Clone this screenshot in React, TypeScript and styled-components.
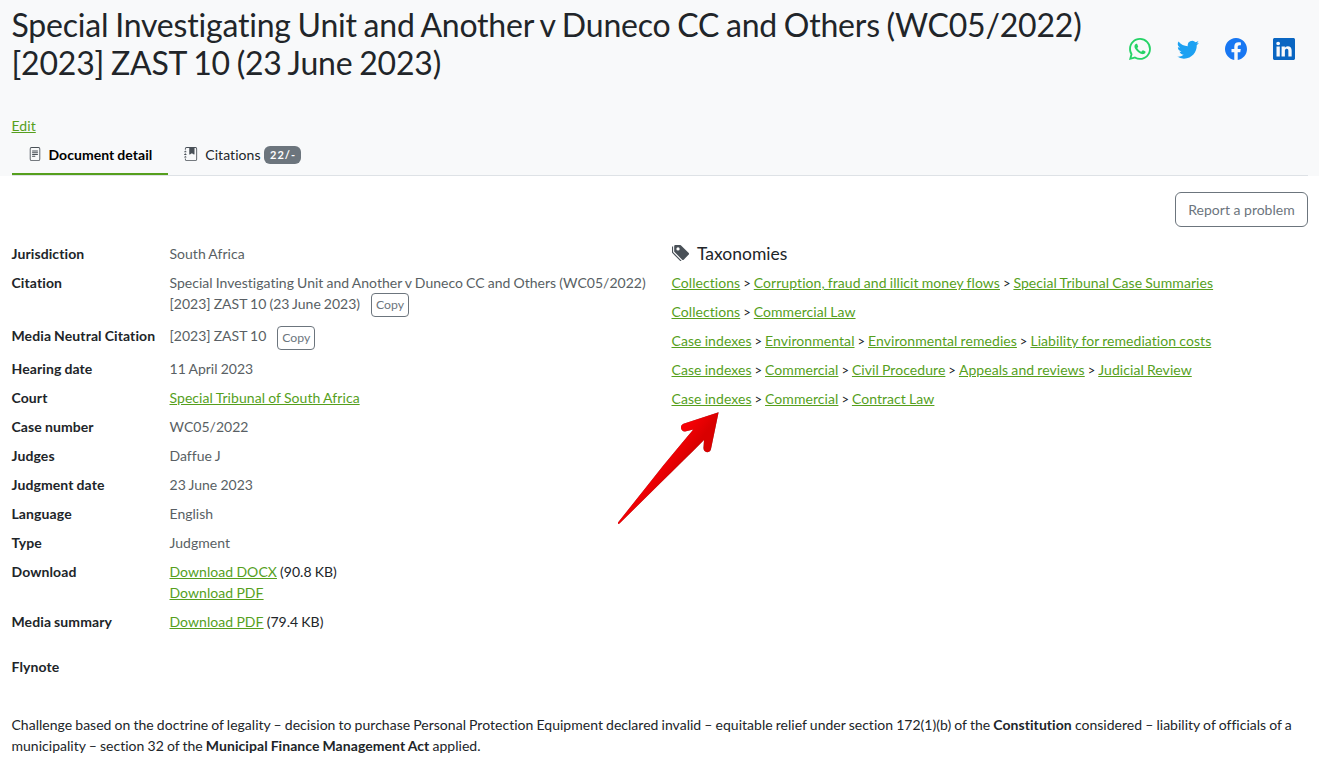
import React from "react";
import styled, { createGlobalStyle } from "styled-components";
import {
  BsFacebook,
  BsFileText,
  BsJournalBookmarkFill,
  BsLinkedin,
  BsTagsFill,
  BsTwitter,
  BsWhatsapp,
} from "react-icons/bs";

const GlobalStyle = createGlobalStyle`
  *, *::before, *::after { box-sizing: border-box; }
  html, body { margin: 0; padding: 0; overflow: hidden; }
  body {
    background: #fff;
    color: #212529;
    font: 400 14px/21px Lato, "Liberation Sans", sans-serif;
    font-variant-ligatures: none;
    letter-spacing: 0.02px;
    word-spacing: -0.5px;
  }
`;

const Page = styled.div`
  position: relative;
  height: 759px;
  overflow: hidden;
`;

const Header = styled.header`
  height: 176px;
  padding: 6px 11px 0 11.5px;
  background: #f8f9fa;
`;

const HeadingRow = styled.div`
  display: flex;
  justify-content: space-between;
  height: 109px;
`;

const Title = styled.h1`
  width: 1090px;
  margin: 0;
  font-size: 32px;
  line-height: 38.4px;
  font-weight: 400;
  letter-spacing: -0.2px;
  word-spacing: -1.2px;
  white-space: nowrap;
`;

const ShareLinks = styled.div`
  display: flex;
  gap: 26px;
  padding: 32px 13.5px 0 0;
`;

const ShareIcon = styled.span<{ $color: string }>`
  display: block;
  height: 22px;
  font-size: 22px;
  line-height: 0;
  color: ${(p) => p.$color};
`;

const Link = styled.a`
  color: #569f1d;
  letter-spacing: 0.065px;
  text-decoration: underline;
`;

const Tabs = styled.nav`
  display: flex;
  height: 40px;
  border-bottom: 1px solid #dee2e6;
`;

const Tab = styled.div<{ $active?: boolean }>`
  display: flex;
  align-items: center;
  height: 39px;
  padding: 0 16px 1px;
  color: ${(p) => (p.$active ? "#000" : "#212529")};
  font-weight: ${(p) => (p.$active ? 700 : 400)};
  letter-spacing: 0.05px;
  border-bottom: 2px solid ${(p) => (p.$active ? "#569f1d" : "transparent")};

  svg {
    margin-right: 7px;
    color: #495057;
  }
`;

const Badge = styled.span`
  width: 37px;
  height: 18px;
  margin: 2px 0 0 3.5px;
  padding-left: 1px;
  border-radius: 6px;
  background: #6c757d;
  color: #fff;
  font-size: 11px;
  line-height: 18px;
  font-weight: 700;
  letter-spacing: 1px;
  text-align: center;
`;

const Main = styled.main`
  padding: 16px 11px 0 11.5px;
`;

const Actions = styled.div`
  display: flex;
  justify-content: flex-end;
  margin-bottom: 16px;
`;

const Button = styled.button<{ $small?: boolean }>`
  width: ${(p) => (p.$small ? "38px" : "133px")};
  height: ${(p) => (p.$small ? "24px" : "35px")};
  padding: 0;
  border: 1px solid #6c757d;
  border-radius: ${(p) => (p.$small ? "4px" : "6px")};
  background: transparent;
  color: #6c757d;
  font-family: inherit;
  font-size: ${(p) => (p.$small ? "12.25px" : "14px")};
  line-height: 18px;
`;

const Columns = styled.div`
  display: grid;
  grid-template-columns: 660px 1fr;
`;

const Details = styled.dl`
  margin: 0;
`;

const DetailRow = styled.div<{ $height?: number }>`
  display: grid;
  grid-template-columns: 158px 490px;
  height: ${(p) => p.$height ?? 29}px;
`;

const Strong = styled.b`
  font-weight: 700;
  letter-spacing: 0.06px;
`;

const Term = styled.dt`
  font-weight: 700;
  letter-spacing: 0.1px;
`;

const Value = styled.dd<{ $muted?: boolean }>`
  margin: 0;
  color: ${(p) => (p.$muted ? "#595f64" : "#212529")};
`;

const CopyLine = styled.div<{ $offset?: number }>`
  display: flex;
  align-items: flex-start;
  gap: 11px;
  letter-spacing: 0;

  button { margin-top: ${(p) => p.$offset ?? 0}px; }
`;

const TaxonomyTitle = styled.h2`
  display: flex;
  align-items: center;
  gap: 8px;
  height: 21px;
  margin: 0 0 8px;
  font-size: 17.5px;
  line-height: 21px;
  font-weight: 400;
  letter-spacing: 0;

  svg { color: #495057; margin-top: -1px; }
`;

const TaxonomyPath = styled.div`
  height: 29px;
  white-space: nowrap;
`;

const Separator = styled.span`
  display: inline-block;
  width: 13.5px;
  text-align: center;
  font-size: 13px;
`;

const SectionTitle = styled.div`
  margin-top: 16px;
  font-weight: 700;
  letter-spacing: 0.1px;
`;

const Summary = styled.p`
  margin: 37px 0 0;
`;

const Arrow = styled.svg`
  position: absolute;
  left: 610px;
  top: 404px;
  filter: drop-shadow(0 0.5px 0.7px rgba(0, 0, 0, 0.5));
`;

const taxonomies = [
  ["Collections", "Corruption, fraud and illicit money flows", "Special Tribunal Case Summaries"],
  ["Collections", "Commercial Law"],
  ["Case indexes", "Environmental", "Environmental remedies", "Liability for remediation costs"],
  ["Case indexes", "Commercial", "Civil Procedure", "Appeals and reviews", "Judicial Review"],
  ["Case indexes", "Commercial", "Contract Law"],
];

const details: { term: string; value: React.ReactNode; height?: number; plain?: boolean }[] = [
  { term: "Jurisdiction", value: "South Africa" },
  {
    term: "Citation",
    height: 53,
    value: (
      <>
        Special Investigating Unit and Another v Duneco CC and Others (WC05/2022)
        <CopyLine>
          [2023] ZAST 10 (23 June 2023) <Button $small>Copy</Button>
        </CopyLine>
      </>
    ),
  },
  {
    term: "Media Neutral Citation",
    height: 33,
    value: (
      <CopyLine $offset={1}>
        [2023] ZAST 10 <Button $small>Copy</Button>
      </CopyLine>
    ),
  },
  { term: "Hearing date", value: "11 April 2023" },
  { term: "Court", value: <Link>Special Tribunal of South Africa</Link> },
  { term: "Case number", value: "WC05/2022" },
  { term: "Judges", value: "Daffue J" },
  { term: "Judgment date", value: "23 June 2023" },
  { term: "Language", value: "English" },
  { term: "Type", value: "Judgment" },
  {
    term: "Download",
    height: 50,
    plain: true,
    value: (
      <>
        <Link>Download DOCX</Link> (90.8 KB)
        <br />
        <Link>Download PDF</Link>
      </>
    ),
  },
  {
    term: "Media summary",
    plain: true,
    value: (
      <>
        <Link>Download PDF</Link> (79.4 KB)
      </>
    ),
  },
];

export default function App() {
  return (
    <Page>
      <GlobalStyle />
      <Header>
        <HeadingRow>
          <Title>
            Special Investigating Unit and Another v Duneco CC and Others (WC05/2022)
            <br />
            [2023] ZAST 10 (23 June 2023)
          </Title>
          <ShareLinks>
            <ShareIcon $color="#25d366"><BsWhatsapp /></ShareIcon>
            <ShareIcon $color="#1da1f2"><BsTwitter /></ShareIcon>
            <ShareIcon $color="#1877f2"><BsFacebook /></ShareIcon>
            <ShareIcon $color="#0a66c2"><BsLinkedin /></ShareIcon>
          </ShareLinks>
        </HeadingRow>
        <div><Link>Edit</Link></div>
        <Tabs>
          <Tab $active><BsFileText />Document detail</Tab>
          <Tab><BsJournalBookmarkFill />Citations<Badge>22/-</Badge></Tab>
        </Tabs>
      </Header>
      <Main>
        <Actions><Button>Report a problem</Button></Actions>
        <Columns>
          <Details>
            {details.map((d) => (
              <DetailRow key={d.term} $height={d.height}>
                <Term>{d.term}</Term>
                <Value $muted={!d.plain}>{d.value}</Value>
              </DetailRow>
            ))}
          </Details>
          <section>
            <TaxonomyTitle><BsTagsFill />Taxonomies</TaxonomyTitle>
            {taxonomies.map((path) => (
              <TaxonomyPath key={path.join()}>
                {path.map((name, i) => (
                  <React.Fragment key={name}>
                    {i > 0 && <Separator>&gt;</Separator>}
                    <Link>{name}</Link>
                  </React.Fragment>
                ))}
              </TaxonomyPath>
            ))}
          </section>
        </Columns>
        <SectionTitle>Flynote</SectionTitle>
        <Summary>
          Challenge based on the doctrine of legality – decision to purchase Personal Protection Equipment
          declared invalid – equitable relief under section 172(1)(b) of the <Strong>Constitution</Strong>{" "}
          considered – liability of officials of a municipality – section 32 of the{" "}
          <Strong>Municipal Finance Management Act</Strong> applied.
        </Summary>
      </Main>
      <Arrow width="120" height="130" viewBox="0 0 120 130">
        <defs>
          <linearGradient id="arrowFill" x1="0.35" y1="0.35" x2="0.65" y2="0.6">
            <stop offset="0.3" stopColor="#f60005" />
            <stop offset="0.75" stopColor="#d90000" />
          </linearGradient>
        </defs>
        <path
          fill="url(#arrowFill)"
          d="M108.600 8.300 L73.500 19.800 C69.500 21.500 70.500 27.500 75 27.500 L83.300 25.500 C70 41 56 58 43 74.500 L8 118.500 Q7.600 120.800 9.500 119.500 L50 79.500 C65 65 80 50 94 36 L93.500 43.500 C93 49.500 100 49.500 101 45 Z"
        />
      </Arrow>
    </Page>
  );
}
